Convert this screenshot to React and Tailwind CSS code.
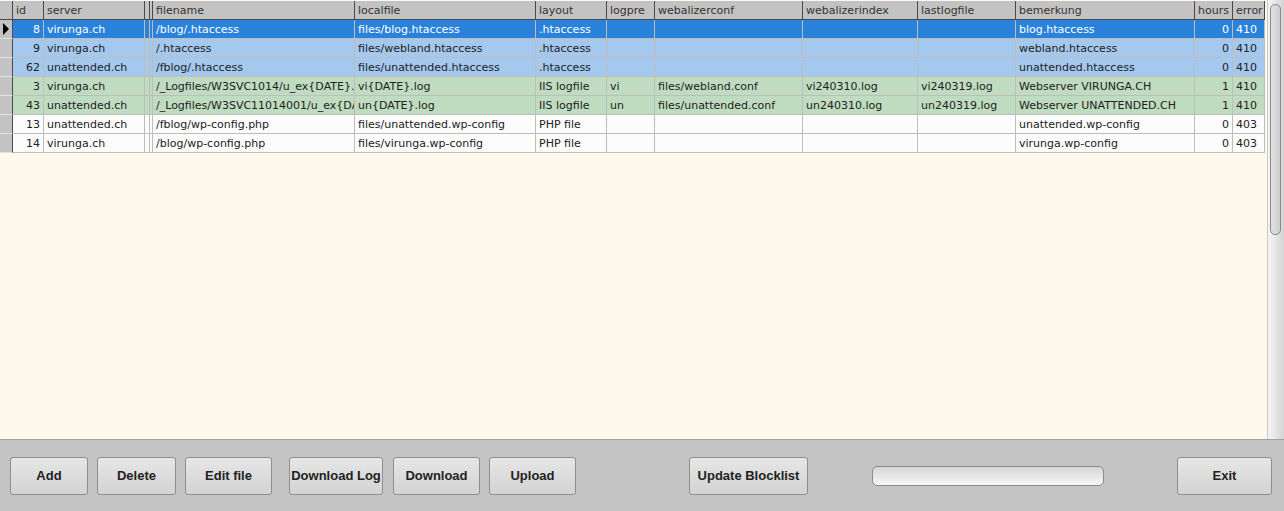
import React from "react";

const cols = [
  { k: "id", w: 31, right: true },
  { k: "server", w: 101 },
  { k: "h1", w: 5, label: "", narrow: true },
  { k: "h2", w: 3, label: "", narrow: true },
  { k: "filename", w: 202 },
  { k: "localfile", w: 181 },
  { k: "layout", w: 71 },
  { k: "logpre", w: 48 },
  { k: "webalizerconf", w: 148 },
  { k: "webalizerindex", w: 115 },
  { k: "lastlogfile", w: 98 },
  { k: "bemerkung", w: 179 },
  { k: "hours", w: 38, right: true },
  { k: "error", w: 32 },
];

const rows = [
  { t: "sel", id: "8", server: "virunga.ch", filename: "/blog/.htaccess", localfile: "files/blog.htaccess", layout: ".htaccess", bemerkung: "blog.htaccess", hours: "0", error: "410" },
  { t: "blue", id: "9", server: "virunga.ch", filename: "/.htaccess", localfile: "files/webland.htaccess", layout: ".htaccess", bemerkung: "webland.htaccess", hours: "0", error: "410" },
  { t: "blue", id: "62", server: "unattended.ch", filename: "/fblog/.htaccess", localfile: "files/unattended.htaccess", layout: ".htaccess", bemerkung: "unattended.htaccess", hours: "0", error: "410" },
  { t: "green", id: "3", server: "virunga.ch", filename: "/_Logfiles/W3SVC1014/u_ex{DATE}.log", localfile: "vi{DATE}.log", layout: "IIS logfile", logpre: "vi", webalizerconf: "files/webland.conf", webalizerindex: "vi240310.log", lastlogfile: "vi240319.log", bemerkung: "Webserver VIRUNGA.CH", hours: "1", error: "410" },
  { t: "green", id: "43", server: "unattended.ch", filename: "/_Logfiles/W3SVC11014001/u_ex{DATE}.log", localfile: "un{DATE}.log", layout: "IIS logfile", logpre: "un", webalizerconf: "files/unattended.conf", webalizerindex: "un240310.log", lastlogfile: "un240319.log", bemerkung: "Webserver UNATTENDED.CH", hours: "1", error: "410" },
  { t: "white", id: "13", server: "unattended.ch", filename: "/fblog/wp-config.php", localfile: "files/unattended.wp-config", layout: "PHP file", bemerkung: "unattended.wp-config", hours: "0", error: "403" },
  { t: "white", id: "14", server: "virunga.ch", filename: "/blog/wp-config.php", localfile: "files/virunga.wp-config", layout: "PHP file", bemerkung: "virunga.wp-config", hours: "0", error: "403" },
];

const rowBg = {
  sel: "bg-[#2a82da] text-white",
  blue: "bg-[#a5c8ef] text-[#222]",
  green: "bg-[#c0dcc0] text-[#222]",
  white: "bg-[#fcfcfc] text-[#222]",
};

function Btn({ label, className }) {
  return (
    <div
      className={
        "h-[38px] shrink-0 flex items-center justify-center rounded-[3px] border border-[#8e8e8e] bg-gradient-to-b from-[#e6e6e6] to-[#d3d3d3] text-[13px] font-bold text-[#222] font-['Liberation_Sans',Arial,sans-serif] whitespace-nowrap " +
        className
      }
    >
      {label}
    </div>
  );
}

export default function App() {
  return (
    <div className="w-[1284px] h-[511px] flex flex-col bg-[#c4c4c4] overflow-hidden font-['DejaVu_Sans',sans-serif] text-[11px]">
      <div className="h-[440px] flex bg-[#fff9ed] border-b border-[#a0a0a0]">
        <div className="w-[1267px] flex flex-col pt-px">
          {/* header */}
          <div className="flex h-[19px] border-b border-[#4a4a4a] bg-[#c3c3c3] text-[#333] w-[1265px]">
            <div className="w-[13px] shrink-0 border-r border-[#4a4a4a]" />
            {cols.map((c) => (
              <div
                key={c.k}
                style={{ width: c.w }}
                className={
                  "shrink-0 border-r border-[#4a4a4a] flex items-center pt-[2px] overflow-hidden whitespace-nowrap " +
                  (c.narrow ? "" : "px-[3px]")
                }
              >
                {c.label === undefined ? c.k : c.label}
              </div>
            ))}
          </div>
          {rows.map((r, i) => (
            <div key={i} className="flex h-[19px] w-[1265px]">
              <div className="w-[13px] shrink-0 border-r border-[#4a4a4a] border-b border-b-[#e2e2e2] bg-[#c3c3c3] flex items-center">
                {r.t === "sel" && (
                  <div className="ml-[3px] w-0 h-0 border-y-[6px] border-y-transparent border-l-[6px] border-l-black" />
                )}
              </div>
              <div className={"flex border-b border-[#bdbdbd] " + rowBg[r.t]}>
                {cols.map((c) => (
                  <div
                    key={c.k}
                    style={{ width: c.w }}
                    className={
                      "shrink-0 border-r border-[#bdbdbd] flex items-center pt-[2px] overflow-hidden whitespace-nowrap " +
                      (c.narrow ? "" : "px-[3px] ") +
                      (c.right ? "justify-end" : "")
                    }
                  >
                    {r[c.k] || ""}
                  </div>
                ))}
              </div>
            </div>
          ))}
        </div>
        {/* scrollbar */}
        <div className="w-[17px] border-l border-[#c8c8c8] bg-gradient-to-r from-[#f6f6f6] to-[#d4d4d4] pt-[4px] pl-[2px]">
          <div className="w-[11px] h-[231px] rounded-[5px] border border-[#8a8a8a] bg-gradient-to-r from-[#e2e2e2] to-[#cdcdcd]" />
        </div>
      </div>
      <div className="flex-1 flex items-center">
        <Btn label="Add" className="ml-[10px] w-[78px]" />
        <Btn label="Delete" className="ml-[9px] w-[79px]" />
        <Btn label="Edit file" className="ml-[9px] w-[87px]" />
        <Btn label="Download Log" className="ml-[17px] w-[94px]" />
        <Btn label="Download" className="ml-[10px] w-[87px]" />
        <Btn label="Upload" className="ml-[9px] w-[87px]" />
        <Btn label="Update Blocklist" className="ml-[113px] w-[119px]" />
        <div className="ml-[64px] w-[232px] h-[20px] shrink-0 rounded-[5px] border border-[#8a8a8a] bg-gradient-to-b from-[#d6d6d6] to-[#f6f6f6]" />
        <Btn label="Exit" className="ml-[73px] w-[95px]" />
      </div>
    </div>
  );
}
